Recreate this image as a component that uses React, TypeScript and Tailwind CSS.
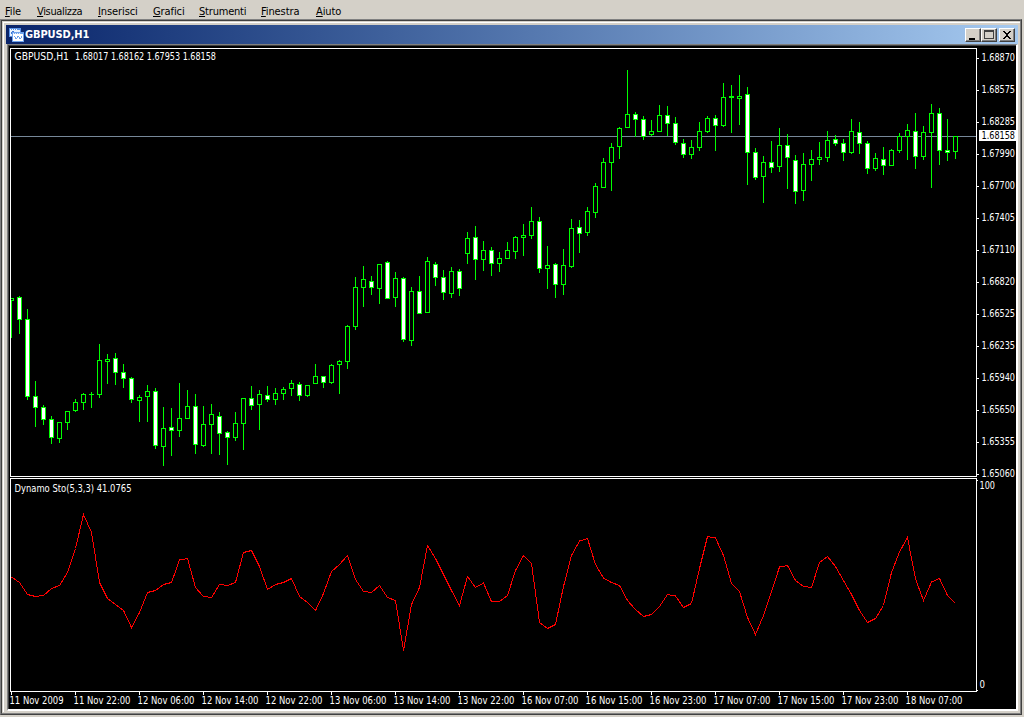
import React from 'react';

// [high, bodyTop, bodyBottom, low, filled]
const CANDLES: number[][] = [
    [298, 298, 301, 338, 0], [296, 297, 320, 334, 1], [309, 319, 397, 400, 1], [381, 396, 408, 427, 1],
    [405, 407, 420, 425, 1], [416, 419, 438, 444, 1], [422, 422, 439, 443, 0], [411, 411, 423, 430, 0],
    [399, 402, 411, 412, 0], [393, 394, 403, 410, 0], [392, 394, 395, 408, 0], [344, 360, 395, 398, 0],
    [354, 359, 362, 384, 0], [353, 358, 373, 385, 1], [364, 372, 379, 388, 1], [377, 378, 400, 403, 1],
    [395, 397, 401, 422, 0], [385, 391, 397, 422, 0], [388, 391, 446, 449, 1], [407, 428, 447, 466, 0],
    [408, 427, 431, 456, 1], [383, 418, 431, 437, 0], [390, 406, 419, 419, 0], [394, 406, 445, 454, 1],
    [406, 424, 446, 447, 0], [404, 414, 425, 454, 0], [412, 416, 434, 455, 1], [431, 432, 438, 465, 1],
    [412, 423, 438, 441, 0], [398, 398, 424, 450, 0], [386, 398, 406, 410, 1], [390, 394, 405, 430, 0],
    [386, 395, 400, 402, 1], [388, 393, 400, 405, 0], [387, 389, 394, 400, 0], [380, 383, 389, 396, 0],
    [382, 384, 396, 401, 1], [385, 385, 396, 397, 0], [364, 376, 384, 384, 0], [376, 376, 383, 388, 1],
    [364, 365, 383, 384, 0], [360, 361, 365, 394, 0], [325, 326, 362, 369, 0], [277, 287, 327, 330, 0],
    [266, 279, 288, 307, 0], [276, 281, 288, 295, 1], [264, 264, 289, 304, 0], [261, 262, 299, 299, 1],
    [272, 278, 298, 307, 0], [277, 278, 340, 342, 1], [287, 291, 341, 346, 0], [276, 291, 314, 314, 1],
    [257, 261, 313, 313, 0], [262, 264, 278, 286, 1], [270, 277, 293, 300, 1], [267, 271, 294, 298, 0],
    [269, 271, 289, 296, 1], [232, 238, 254, 264, 0], [226, 237, 260, 280, 1], [241, 250, 260, 271, 0],
    [247, 250, 264, 276, 1], [252, 258, 264, 272, 0], [242, 250, 259, 259, 0], [236, 237, 252, 259, 0],
    [224, 235, 238, 256, 0], [207, 221, 236, 239, 0], [217, 221, 269, 273, 1], [246, 265, 269, 289, 0],
    [263, 264, 285, 298, 1], [249, 265, 285, 295, 0], [219, 228, 267, 268, 0], [220, 227, 234, 253, 1],
    [207, 211, 233, 236, 0], [183, 186, 213, 218, 0], [158, 162, 188, 188, 0], [143, 147, 163, 191, 0],
    [127, 128, 147, 159, 0], [70, 114, 128, 128, 0], [112, 114, 120, 137, 1], [116, 119, 137, 140, 1],
    [120, 131, 135, 136, 0], [105, 115, 132, 132, 0], [106, 115, 124, 136, 1], [117, 123, 143, 145, 1],
    [139, 143, 155, 158, 1], [140, 147, 155, 159, 0], [122, 131, 148, 151, 0], [116, 118, 132, 133, 0],
    [115, 118, 126, 151, 1], [83, 97, 126, 127, 0], [85, 96, 98, 133, 0], [75, 96, 99, 125, 0],
    [87, 94, 153, 185, 1], [148, 152, 178, 180, 1], [156, 162, 177, 203, 0], [141, 162, 168, 173, 1],
    [128, 145, 167, 172, 0], [134, 145, 158, 189, 1], [155, 160, 192, 204, 1], [153, 164, 191, 201, 0],
    [150, 159, 165, 181, 0], [142, 157, 160, 165, 0], [131, 140, 158, 162, 0], [135, 139, 144, 146, 1],
    [139, 143, 153, 161, 1], [119, 131, 153, 154, 0], [122, 132, 144, 154, 1], [141, 143, 169, 174, 1],
    [153, 158, 169, 171, 0], [147, 159, 166, 175, 1], [149, 150, 166, 166, 0], [133, 136, 151, 153, 0],
    [124, 130, 137, 160, 0], [113, 131, 157, 169, 1], [126, 132, 157, 160, 0], [104, 113, 133, 188, 0],
    [108, 113, 151, 165, 1], [119, 150, 153, 161, 1], [136, 136, 152, 159, 0],
];

const STOCHASTIC = [
    576.5, 582, 594, 596, 595, 588, 585, 572, 548, 514, 532, 582, 598, 604, 610, 627, 612, 592, 590, 584,
    582, 559.5, 558, 587, 596, 597, 584, 585, 582, 552, 550, 566, 589, 584, 582, 578, 596, 602, 610, 593,
    571, 564, 555, 579, 591, 592, 585, 597, 600, 650, 604, 587, 545, 558, 574, 590, 605, 576, 587, 582.5,
    601, 601, 595, 570, 555, 563, 622, 628, 624, 586, 555, 540.5, 538, 564, 577.5, 582, 585, 600, 609, 616,
    614, 606, 594, 595.5, 607, 603, 568, 536, 537.5, 555, 583, 591, 617, 634, 615, 591, 566.5, 565, 580, 586,
    587, 562, 556, 566, 580, 594, 610, 622, 618, 605, 572, 551.5, 537, 578.5, 600, 581.5, 578, 595, 603,
];

const PRICES = [
    '1.68870', '1.68575', '1.68285', '1.67990', '1.67700', '1.67405', '1.67110',
    '1.66820', '1.66525', '1.66235', '1.65940', '1.65650', '1.65355', '1.65060',
];

const DATES = [
    '11 Nov 2009', '11 Nov 22:00', '12 Nov 06:00', '12 Nov 14:00', '12 Nov 22:00',
    '13 Nov 06:00', '13 Nov 14:00', '13 Nov 22:00', '16 Nov 07:00', '16 Nov 15:00',
    '16 Nov 23:00', '17 Nov 07:00', '17 Nov 15:00', '17 Nov 23:00', '18 Nov 07:00',
];

const MENU = [
    { label: 'File', width: 'w-8' },
    { label: 'Visualizza', width: 'w-[61px] tracking-[-0.35px]' },
    { label: 'Inserisci', width: 'w-[55px]' },
    { label: 'Grafici', width: 'w-[46px]' },
    { label: 'Strumenti', width: 'w-[62px] tracking-[-0.2px]' },
    { label: 'Finestra', width: 'w-[55px]' },
    { label: 'Aiuto', width: 'w-10' },
];

const candleX = (i: number) => 11 + i * 8;

interface LabelProps {
    x: number;
    y: number;
    width: number;
    fill?: string;
    children: string;
}

const Label: React.FC<LabelProps> = ({ x, y, width, fill = '#fff', children }) => (
    <text x={x} y={y} textLength={width} lengthAdjust="spacingAndGlyphs" fill={fill} xmlSpace="preserve">
        {children}
    </text>
);

const MenuBar: React.FC = () => (
    <nav className="flex h-[19px] items-start pl-[5px] pt-1 text-[11px] leading-[15px] tracking-[-0.1px] text-black">
        {MENU.map(({ label, width }) => (
            <span key={label} className={`shrink-0 whitespace-nowrap ${width}`}>
                <span className="underline underline-offset-1">{label[0]}</span>
                {label.slice(1)}
            </span>
        ))}
    </nav>
);

const ChartIcon: React.FC = () => (
    <svg width="16" height="16" viewBox="0 0 16 16" shapeRendering="crispEdges">
        <rect x="0" y="1" width="12" height="9" fill="#5b93e6" />
        <rect x="1" y="3" width="10" height="6" fill="#e8f3ff" />
        <path d="M1 2h1M3 2h1M5 2h1M7 2h1" stroke="#fff" />
        <path d="M2 7l2-3 2 3" stroke="#3c78d8" fill="none" />
        <rect x="3" y="5" width="12" height="10" fill="#6fa3ec" />
        <rect x="4" y="7" width="10" height="7" fill="#fff" />
        <path d="M4 6h1M6 6h1M8 6h1M10 6h1" stroke="#dcecff" />
        <path
            d="M5 9h1v1h-1zM6 10h1v2h-1zM7 11h1v1h-1zM8 9h1v2h-1zM9 9h1v1h-1zM10 10h1v2h-1zM11 11h1v1h-1zM12 9h1v2h-1z"
            fill="#6fa3ec"
        />
    </svg>
);

const TitleButton: React.FC<{ children: React.ReactNode }> = ({ children }) => (
    <button className="h-[14px] w-4 border border-b-[#404040] border-l-white border-r-[#404040] border-t-white bg-[#d4d0c8]">
        <span className="block h-3 w-[14px] border-b border-r border-[#808080]">
            <svg width="13" height="11" viewBox="0 0 13 11" shapeRendering="crispEdges">
                {children}
            </svg>
        </span>
    </button>
);

const TitleBar: React.FC = () => (
    <div className="flex h-[19px] items-center bg-linear-to-r from-[#0a246a] to-[#a6caf0] pl-[3px] pr-[3px]">
        <ChartIcon />
        <span className="pt-px text-[11px] font-bold leading-4 tracking-[-0.1px] text-white">GBPUSD,H1</span>
        <div className="ml-auto flex">
            <TitleButton>
                <rect x="3" y="9" width="6" height="2" fill="#000" />
            </TitleButton>
            <TitleButton>
                <path d="M2 1h10v9h-10zM3 3v6h8v-6z" fill="#404040" fillRule="evenodd" />
            </TitleButton>
            <span className="w-[2px]" />
            <TitleButton>
                <path
                    d="M3 2h2v1h1v1h2v-1h1v-1h2v1h-1v1h-1v1h-1v2h1v1h1v1h1v1h-2v-1h-1v-1h-2v1h-1v1h-2v-1h1v-1h1v-1h1v-2h-1v-1h-1v-1h-1z"
                    fill="#000"
                />
            </TitleButton>
        </div>
    </div>
);

const Candle: React.FC<{ x: number; data: number[] }> = ({ x, data }) => {
    const [high, top, bottom, low, filled] = data;
    return (
        <g>
            <rect x={x} y={high} width={1} height={low - high} fill="#0f0" />
            <rect x={x - 2} y={top} width={5} height={bottom - top} fill="#0f0" />
            {bottom - top > 2 && (
                <rect x={x - 1} y={top + 1} width={3} height={bottom - top - 2} fill={filled ? '#fff' : '#000'} />
            )}
        </g>
    );
};

const Chart: React.FC = () => (
    <svg
        className="block bg-black"
        width="1007"
        height="663"
        viewBox="9 46 1007 663"
        fontSize="9.6"
        shapeRendering="crispEdges"
    >
        <clipPath id="plot">
            <rect x="11" y="49" width="965" height="427" />
        </clipPath>

        {/* price line */}
        <rect x="11" y="136" width="966" height="1" fill="#778899" />
        <g clipPath="url(#plot)">
            {CANDLES.map((data, i) => (
                <Candle key={i} x={candleX(i)} data={data} />
            ))}
        </g>

        {/* stochastic */}
        <polyline
            points={STOCHASTIC.map((y, i) => `${candleX(i) + 0.5},${y + 0.5}`).join(' ')}
            fill="none"
            stroke="#f00"
        />

        {/* panes */}
        <path d="M976.5 476.5H10.5V48.5H976.5V476.5M976.5 691.5H10.5V478.5H976.5V691.5" fill="none" stroke="#fff" />
        <path d="M977 480.5h1M977 690.5h1" stroke="#fff" />

        {PRICES.map((price, i) => (
            <g key={price}>
                <rect x="977" y={58 + i * 32} width="2" height="1" fill="#fff" />
                <Label x={981.5} y={61 + i * 32} width={33.5}>{price}</Label>
            </g>
        ))}
        <rect x="979" y="130" width="37" height="11" fill="#fff" />
        <Label x={981.5} y={139} width={33.5} fill="#000">1.68158</Label>

        {DATES.map((date, i) => (
            <g key={date}>
                <rect x={11 + i * 64} y="692" width="1" height="3" fill="#fff" />
                <Label x={9.5 + i * 64} y={704} width={i === 0 ? 54 : 57}>{date}</Label>
            </g>
        ))}

        <Label x={14.5} y={60} width={54.5}>GBPUSD,H1</Label>
        <Label x={75} y={60} width={141}>1.68017 1.68162 1.67953 1.68158</Label>
        <Label x={14.5} y={492} width={117}>Dynamo Sto(5,3,3) 41.0765</Label>
        <Label x={979.5} y={489} width={15.5}>100</Label>
        <Label x={979.5} y={688} width={5.5}>0</Label>
    </svg>
);

export default function App() {
    return (
        <div className="h-[717px] w-[1024px] overflow-hidden bg-[#d4d0c8] font-['DejaVu_Sans_Condensed','DejaVu_Sans',sans-serif]">
            <MenuBar />
            <div className="h-[696px] w-[1022px] border border-[#808080] border-b-[#404040] border-r-[#404040]">
                <div className="h-[694px] w-[1020px] border border-[#404040] border-b-[#808080] border-r-[#808080]">
                    <div className="h-[692px] border-b border-[#d4d0c8] pl-px pt-px">
                        <div className="h-[690px] border-l border-t border-white pl-[2px] pt-[2px]">
                            <div className="w-[1012px]">
                                <TitleBar />
                                <div className="ml-px h-[667px] w-[1011px] border-b-2 border-r-2 border-white border-l border-l-[#808080] border-t border-t-[#808080]">
                                    <div className="h-[664px] w-[1008px] border-l border-t border-[#404040]">
                                        <Chart />
                                    </div>
                                </div>
                            </div>
                        </div>
                    </div>
                </div>
            </div>
        </div>
    );
}
